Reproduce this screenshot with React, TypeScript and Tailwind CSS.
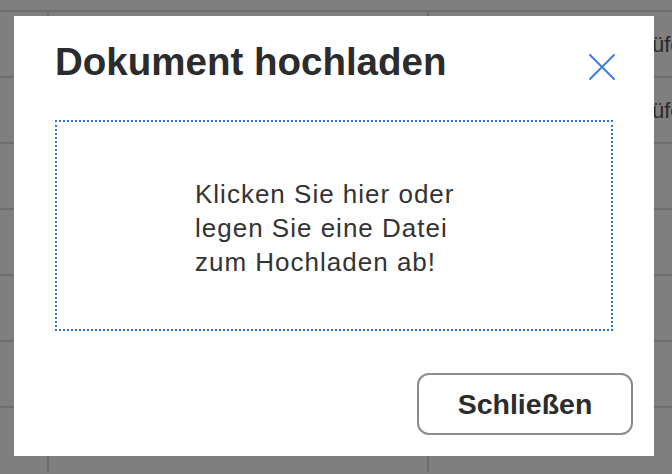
const rows = ["Prüfen", "Prüfen", "", "", "", "", ""]

const CloseIcon = () => (
  <svg width="26" height="26" viewBox="0 0 26 26" fill="none" stroke="currentColor" strokeWidth="1.9" strokeLinecap="round">
    <path d="M1 1L25 25M25 1L1 25" />
  </svg>
)

const UploadDialog = () => {
  return (
    <div className="flex h-[440px] w-[640px] flex-col bg-white px-[41px] pb-[21px] pt-[18px]">
      <div className="flex items-start justify-between">
        <h1 className="text-[38.5px] font-bold leading-[56px] text-[#2c2c2c]">Dokument hochladen</h1>
        <button className="mr-[-2px] mt-[20px] text-[#3b7ddd]">
          <CloseIcon />
        </button>
      </div>
      <div className="mt-[30px] flex h-[211px] items-center justify-center border-2 border-dotted border-[#2f74d0] pt-[4px]">
        <p className="w-[278px] text-[26px] leading-[34px] tracking-[1px] text-[#333]">
          Klicken Sie hier oder legen Sie eine Datei zum Hochladen ab!
        </p>
      </div>
      <div className="mt-auto flex justify-end">
        <button className="mr-[-20px] h-[62px] w-[216px] rounded-[12px] border-2 border-[#8c8c8c] text-[28.5px] font-bold text-[#2c2c2c]">
          Schließen
        </button>
      </div>
    </div>
  )
}

const App = () => {
  return (
    <main className="relative h-[474px] w-[672px] overflow-hidden bg-white font-['Liberation_Sans',Arial,sans-serif]">
      <div className="pt-[10px]">
        {rows.map((label, i) => (
          <div key={i} className="grid h-[66px] grid-cols-[49px_380px_1fr] border-t-2 border-[#dcdcdc]">
            <div className="border-r-2 border-[#dcdcdc]" />
            <div className="border-r-2 border-[#dcdcdc]" />
            <div className="flex items-center pl-[201px] text-[22px] text-[#555]">{label}</div>
          </div>
        ))}
      </div>
      <div className="absolute inset-0 bg-black/50 pl-[14px] pt-[16px]">
        <UploadDialog />
      </div>
    </main>
  )
}

export default App
